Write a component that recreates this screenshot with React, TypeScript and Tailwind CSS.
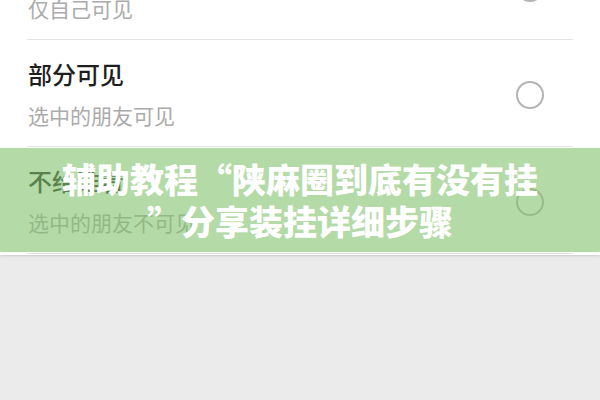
const rows = [
  { title: "仅自己可见", sub: "仅自己可见" },
  { title: "部分可见", sub: "选中的朋友可见" },
  { title: "不给谁看", sub: "选中的朋友不可见" },
];

const font = { fontFamily: '"Noto Sans CJK SC", "Noto Sans", sans-serif' };

export default function App() {
  return (
    <div
      className="relative h-[400px] w-[600px] overflow-hidden bg-[#ebebeb]"
      style={font}
    >
      <div className="-mt-[67px] bg-white pb-[1px] shadow-sm">
        {rows.map((row) => (
          <div key={row.sub} className="mx-[27px] border-b border-[#e4e4e4]">
            <div className="flex h-[106px] items-center justify-between pl-[1px] pr-[29px]">
              <div className="flex flex-col gap-[12px] pt-[2px]">
                <div className="text-[24px] font-medium leading-[30px] text-[#1e1e1e]">
                  {row.title}
                </div>
                <div className="text-[21px] leading-[28px] text-[#ababab]">
                  {row.sub}
                </div>
              </div>
              <div className="mt-[3px] h-[28px] w-[28px] rounded-full border-2 border-[#b3b3b3]" />
            </div>
          </div>
        ))}
      </div>

      <div className="absolute left-0 right-0 top-[148px] flex h-[104px] flex-col items-center justify-center bg-[rgba(130,194,108,0.6)]">
        <div className="text-center text-[34px] font-black leading-[42px] text-white">
          辅助教程“陕麻圈到底有没有挂
          <br />
          ”分享装挂详细步骤
        </div>
      </div>
    </div>
  );
}
